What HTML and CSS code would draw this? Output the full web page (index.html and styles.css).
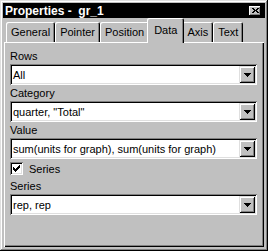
FILE: index.html
```html
<!DOCTYPE html>
<html lang="en">
<head>
    <meta charset="UTF-8">
    <title>Properties</title>
    <link rel="stylesheet" href="styles.css">
</head>
<body>
    <div class="window">
        <!-- Заголовок окна -->
        <div class="titlebar">
            <span class="title">Properties -  gr_1</span>
            <span class="close-btn">
                <svg width="7" height="5" viewBox="0 0 7 5"><path d="M0 0h2v1H0zM5 0h2v1H5zM1 1h2v1H1zM4 1h2v1H4zM2 2h3v1H2zM1 3h2v1H1zM4 3h2v1H4zM0 4h2v1H0zM5 4h2v1H5z" fill="#000"/></svg>
            </span>
        </div>

        <!-- Вкладки -->
        <div class="tabs">
            <div class="tab">General</div>
            <div class="tab">Pointer</div>
            <div class="tab">Position</div>
            <div class="tab active">Data</div>
            <div class="tab">Axis</div>
            <div class="tab">Text</div>
        </div>

        <div class="panel">
            <div class="field-label">Rows</div>
            <div class="combo">
                <span class="combo-text">All</span>
                <span class="combo-btn"><svg width="7" height="4" viewBox="0 0 7 4"><path d="M0 0h7v1H0zM1 1h5v1H1zM2 2h3v1H2zM3 3h1v1H3z" fill="#000"/></svg></span>
            </div>

            <div class="field-label">Category</div>
            <div class="combo">
                <span class="combo-text">quarter, "Total"</span>
                <span class="combo-btn"><svg width="7" height="4" viewBox="0 0 7 4"><path d="M0 0h7v1H0zM1 1h5v1H1zM2 2h3v1H2zM3 3h1v1H3z" fill="#000"/></svg></span>
            </div>

            <div class="field-label">Value</div>
            <div class="combo">
                <span class="combo-text">sum(units for graph), sum(units for graph)</span>
                <span class="combo-btn"><svg width="7" height="4" viewBox="0 0 7 4"><path d="M0 0h7v1H0zM1 1h5v1H1zM2 2h3v1H2zM3 3h1v1H3z" fill="#000"/></svg></span>
            </div>

            <div class="check-row">
                <span class="checkbox"><svg width="7" height="7" viewBox="0 0 7 7"><path d="M0 2h1v3H0zM1 3h1v3H1zM2 4h1v3H2zM3 3h1v3H3zM4 2h1v3H4zM5 1h1v3H5zM6 0h1v3H6z" fill="#000"/></svg></span>
                <span>Series</span>
            </div>

            <div class="field-label">Series</div>
            <div class="combo">
                <span class="combo-text">rep, rep</span>
                <span class="combo-btn"><svg width="7" height="4" viewBox="0 0 7 4"><path d="M0 0h7v1H0zM1 1h5v1H1zM2 2h3v1H2zM3 3h1v1H3z" fill="#000"/></svg></span>
            </div>
        </div>
    </div>
</body>
</html>
```

FILE: styles.css
```css
/* Общие стили */
body {
    margin: 0;
    background: #c0c0c0;
    font-family: "Liberation Sans", Arial, sans-serif;
    font-size: 11px;
    color: #000;
}

.window {
    width: 268px;
    height: 251px;
    box-sizing: border-box;
    padding: 3px;
    display: flex;
    flex-direction: column;
    background: #c0c0c0;
    box-shadow: inset -1px -1px #000, inset 1px 1px #dfdfdf, inset -2px -2px #808080, inset 2px 2px #fff;
}

/* Заголовок */
.titlebar {
    height: 15px;
    background: #000;
    display: flex;
    align-items: center;
    padding: 0 4px 0 2px;
}

.title {
    color: #fff;
    font-weight: bold;
    font-size: 12px;
    white-space: pre;
    flex: 1;
}

.close-btn {
    width: 12px;
    height: 10px;
    display: flex;
    align-items: center;
    justify-content: center;
    background: #c0c0c0;
    box-shadow: inset -1px -1px #000, inset 1px 1px #fff, inset -2px -2px #808080;
}

/* Вкладки */
.tabs {
    height: 24px;
    display: flex;
    align-items: flex-end;
    padding-left: 3px;
}

.tab {
    height: 20px;
    box-sizing: border-box;
    padding: 4px 5px 0;
    line-height: 13px;
    border-radius: 2px 2px 0 0;
    box-shadow: inset 1px 1px #fff, inset -1px 0 #000, inset -2px 0 #808080;
}

.tab.active {
    height: 25px;
    padding-top: 6px;
    margin: 0 -2px -1px;
    padding-left: 7px;
    padding-right: 7px;
    position: relative;
    z-index: 1;
    background: #c0c0c0;
}

/* Панель */
.panel {
    flex: 1;
    margin: 0 1px 1px;
    padding: 6px 7px 0 6px;
    box-shadow: inset 1px 1px #fff, inset -1px -1px #000, inset -2px -2px #808080;
}

.field-label {
    line-height: 16px;
}

.combo {
    height: 21px;
    box-sizing: border-box;
    padding: 2px;
    display: flex;
    align-items: center;
    background: #fff;
    box-shadow: inset 1px 1px #808080, inset -1px -1px #fff, inset 2px 2px #000, inset -2px -2px #dfdfdf;
}

.combo-text {
    flex: 1;
    padding-left: 1px;
    white-space: nowrap;
    overflow: hidden;
}

.combo-btn {
    width: 16px;
    height: 17px;
    display: flex;
    align-items: center;
    justify-content: center;
    background: #c0c0c0;
    box-shadow: inset 1px 1px #dfdfdf, inset -1px -1px #000, inset 2px 2px #fff, inset -2px -2px #808080;
}

/* Флажок */
.check-row {
    height: 19px;
    display: flex;
    align-items: center;
    gap: 6px;
}

.checkbox {
    width: 13px;
    height: 13px;
    display: flex;
    align-items: center;
    justify-content: center;
    background: #fff;
    box-shadow: inset 1px 1px #808080, inset -1px -1px #fff, inset 2px 2px #000, inset -2px -2px #dfdfdf;
}
```
